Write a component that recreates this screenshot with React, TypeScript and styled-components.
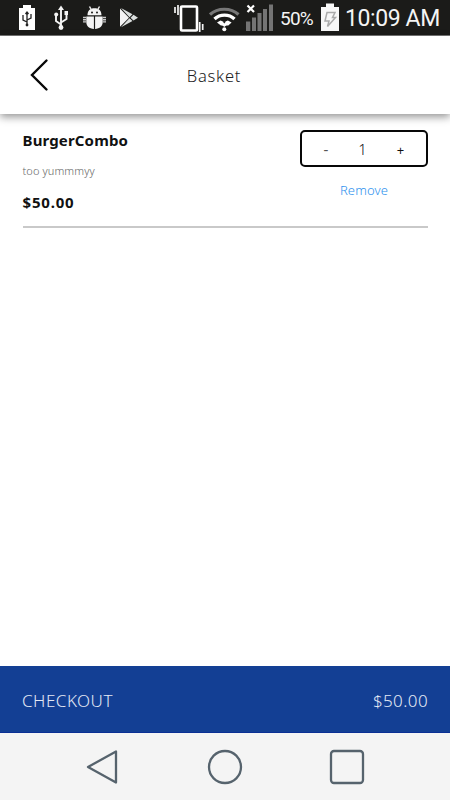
import React from 'react';
import styled, { createGlobalStyle } from 'styled-components';

const Global = createGlobalStyle`
  * { box-sizing: border-box; }
  body { margin: 0; background: #fff; }
  button { appearance: none; background: none; border: 0; margin: 0; padding: 0; font: inherit; color: inherit; }
`;

const Screen = styled.div`
  width: 450px;
  height: 800px;
  display: flex;
  flex-direction: column;
  overflow: hidden;
  background: #fff;
  font-family: 'Noto Sans', sans-serif;
  color: #111;
`;

const StatusBar = styled.div`
  height: 36px;
  flex: none;
  display: flex;
  background: #1b1b19;
  border-bottom: 1px solid #777;
  color: #f4f4f4;
  font-family: Roboto, sans-serif;
  white-space: nowrap;
`;

const StatusIcon = styled.svg<{ $before: number }>`
  height: 35px;
  flex: none;
  margin-left: ${(p) => p.$before}px;
`;

const StatusText = styled.span<{ $size: number; $width: number; $before: number; $spacing: number }>`
  flex: none;
  width: ${(p) => p.$width}px;
  margin-left: ${(p) => p.$before}px;
  font-size: ${(p) => p.$size}px;
  letter-spacing: ${(p) => p.$spacing}px;
  line-height: 38px;
  height: 35px;
`;

const Header = styled.header`
  height: 78px;
  flex: none;
  display: grid;
  grid-template-columns: 78px 272px 1fr;
  align-items: center;
  background: #fff;
  box-shadow: 0 3px 8px 0 rgba(0, 0, 0, 0.42);
`;

const BackButton = styled.button`
  height: 34px;
  padding-left: 28px;
  display: flex;
`;

const Copy = styled.span<{ $size: number; $spacing?: number; $weight?: number; $color?: string }>`
  font-size: ${(p) => p.$size}px;
  font-weight: ${(p) => p.$weight ?? 400};
  letter-spacing: ${(p) => p.$spacing ?? 0}px;
  color: ${(p) => p.$color ?? 'inherit'};
  line-height: 20px;
  white-space: nowrap;
`;

const Title = styled(Copy)`
  text-align: center;
  padding-top: 1px;
`;

const Main = styled.main`
  flex: 1;
  padding: 16px 22px 0 22.5px;
`;

const Item = styled.section`
  height: 98px;
  display: flex;
  justify-content: space-between;
  border-bottom: 2px solid #c9c9c9;
`;

const Details = styled.div`
  display: flex;
  flex-direction: column;
`;

const Description = styled(Copy)`
  margin: 11px 0;
`;

const Actions = styled.div`
  width: 128px;
  display: flex;
  flex-direction: column;
  align-items: center;
`;

const Stepper = styled.div`
  width: 128px;
  height: 37px;
  flex: none;
  display: grid;
  grid-template-columns: 48px 25px 1fr;
  align-items: center;
  text-align: center;
  border: 2px solid #080808;
  border-radius: 5px;
  margin-bottom: 11px;
`;

const Checkout = styled.footer`
  height: 67px;
  flex: none;
  display: flex;
  align-items: center;
  justify-content: space-between;
  padding: 3px 22px 0 22px;
  background: #133f94;
  border-bottom: 1px solid #0a2f94;
  color: #e4e9f5;
`;

const NavBar = styled.nav`
  height: 67px;
  flex: none;
  display: flex;
  align-items: center;
  justify-content: space-between;
  padding: 0 85px 0 84px;
  background: #f4f4f4;
`;

const NavIcon = styled.svg`
  width: 36px;
  height: 36px;
  fill: none;
  stroke: #56636d;
  stroke-width: 2.3;
  stroke-linejoin: round;
`;

const UsbBattery = () => (
  <StatusIcon $before={19} width="17" viewBox="19 0 17 35">
    <path d="M19 8h4V5h8v3h4v22H19z" fill="#fff" />
    <path d="M27 12v13M27 22l-4-2v-5M27 20l4-2v-4M25.5 14l1.5-2 1.5 2" fill="none" stroke="#222" strokeWidth="1.3" />
    <circle cx="27" cy="25" r="1.4" fill="#222" />
  </StatusIcon>
);

const Usb = () => (
  <StatusIcon $before={18} width="16" viewBox="54 0 16 35">
    <path d="M61 8v19M61 24.500l-5-3.500v-6M61 22.500l5.500-3.500v-6" fill="none" stroke="#f4f4f4" strokeWidth="1.900" />
    <path d="M58 10l3-4.500 3 4.500z" fill="#f4f4f4" />
    <circle cx="61" cy="27.500" r="2.400" fill="#f4f4f4" />
    <circle cx="56.200" cy="14.500" r="2" fill="#f4f4f4" />
    <path d="M64.500 11h3.500v4h-3.500z" fill="#f4f4f4" />
  </StatusIcon>
);

const Bug = () => (
  <StatusIcon $before={13} width="24" viewBox="83 0 24 35">
    <path d="M87.500 15.200c0-4.500 2.500-7 7-7s7 2.500 7 7zM86.300 16.400h7.600v12.600c-4.600-.3-7.600-3-7.600-7zM95.100 16.400h7.600v5.600c0 4-3 6.700-7.600 7z" fill="#f4f4f4" />
    <path d="M89.500 6.500l2 3.500M99.500 6.500l-2 3.500" stroke="#e8e8e8" strokeWidth="1.500" />
    <path d="M83 17.500h3M83 19.700h3M83 21.900h3M103 17.500h3M103 19.700h3M103 21.900h3" stroke="#ccc" strokeWidth="1.400" />
    <circle cx="92" cy="12.500" r="1" fill="#1b1b19" />
    <circle cx="97" cy="12.500" r="1" fill="#1b1b19" />
  </StatusIcon>
);

const PlayStore = () => (
  <StatusIcon $before={13} width="19" viewBox="120 0 19 35">
    <path d="M120 8.500l9 9.200-9 9.100z" fill="#f4f4f4" />
    <path d="M121 8l11.500 6.300-3 2.900zM121 27.200l11.500-6.200-3-2.700zM133.500 14.800l4.500 2.900-4.500 2.800-3-2.800z" fill="#dce0df" />
  </StatusIcon>
);

const Vibrate = () => (
  <StatusIcon $before={35} width="31" viewBox="174 0 31 35">
    <rect x="181" y="6.500" width="16" height="24" rx="1" fill="none" stroke="#fff" strokeWidth="2.600" />
    <path d="M175 7v6M178 5v10M199.700 22v10M202.700 24v6" stroke="#f4f4f4" strokeWidth="1.700" />
  </StatusIcon>
);

const Wifi = () => (
  <StatusIcon $before={4} width="32" viewBox="209 0 32 35">
    <path d="M210 14.500c7.500-7 21-7 28.500 0" fill="none" stroke="#777" strokeWidth="3.200" />
    <path d="M214.500 19c5.500-5.200 14.500-5.200 20 0" fill="none" stroke="#fff" strokeWidth="3.400" />
    <path d="M217 22.500l3.500-2 3.700 1.500 3.700-1.500 3.700 2-3.300 3-7.400 0z" fill="#fff" />
    <path d="M220.700 24h7.200l-3.600 3z" fill="#fff" />
    <path d="M222.700 21.500h3.200l-1.600 2z" fill="#1b1b19" />
    <circle cx="224.300" cy="29.300" r="2" fill="#fff" />
  </StatusIcon>
);

const Signal = () => (
  <StatusIcon $before={5} width="28" viewBox="246 0 28 35">
    <path d="M246 21.500h4.300V31H246zM252 17.500h4V31h-4zM257.500 13h4v18h-4zM263 9h4v22h-4zM269 4.500h4V31h-4z" fill="#747474" />
    <path d="M247.500 5.500l6.500 6.500M254 5.500l-6.500 6.500" stroke="#fff" strokeWidth="2.200" />
  </StatusIcon>
);

const Charging = () => (
  <StatusIcon $before={6} width="19" viewBox="321 0 19 35">
    <path d="M321 7h5V3.500h8V7h5v24h-18z" fill="#f7f7f7" />
    <path d="M327 12.500h8l-2.500 5h3l-8 9 1.500-5.500h-4z" fill="none" stroke="#aaa" strokeWidth="1.500" />
  </StatusIcon>
);

export default function App() {
  return (
    <Screen>
      <Global />
      <StatusBar>
        <UsbBattery />
        <Usb />
        <Bug />
        <PlayStore />
        <Vibrate />
        <Wifi />
        <Signal />
        <StatusText $size={19} $width={35} $before={6} $spacing={-0.8}>50%</StatusText>
        <Charging />
        <StatusText $size={23} $width={100} $before={5} $spacing={-0.4}>10:09 AM</StatusText>
      </StatusBar>
      <Header>
        <BackButton aria-label="Back">
          <svg width="22" height="34" viewBox="0 0 22 34" fill="none" stroke="#080808" strokeWidth="2.400" strokeLinecap="round">
            <path d="M18.500 2.500L4 17l14.500 14.500" />
          </svg>
        </BackButton>
        <Title $size={16.5} $weight={300} $spacing={0.75} $color="#222">Basket</Title>
      </Header>
      <Main>
        <Item>
          <Details>
            <Copy $size={15} $weight={700} $spacing={0.15}>BurgerCombo</Copy>
            <Description $size={11} $weight={300} $spacing={0.1} $color="#666">too yummmyy</Description>
            <Copy $size={15} $weight={700} $spacing={0.8}>$50.00</Copy>
          </Details>
          <Actions>
            <Stepper>
              <button aria-label="Decrease"><Copy $size={15} $color="#555">-</Copy></button>
              <Copy $size={15} $weight={300}>1</Copy>
              <button aria-label="Increase"><Copy $size={13}>+</Copy></button>
            </Stepper>
            <button><Copy $size={13} $weight={300} $spacing={0.15} $color="#2f92ee">Remove</Copy></button>
          </Actions>
        </Item>
      </Main>
      <Checkout>
        <Copy $size={17} $weight={300} $spacing={0.5}>CHECKOUT</Copy>
        <Copy $size={17} $weight={300} $spacing={0.4}>$50.00</Copy>
      </Checkout>
      <NavBar>
        <NavIcon viewBox="0 0 36 36"><path d="M32 2.500v31L4 18z" /></NavIcon>
        <NavIcon viewBox="0 0 36 36"><circle cx="18" cy="18" r="16" /></NavIcon>
        <NavIcon viewBox="0 0 36 36"><rect x="2" y="2" width="32" height="32" rx="3" /></NavIcon>
      </NavBar>
    </Screen>
  );
}
